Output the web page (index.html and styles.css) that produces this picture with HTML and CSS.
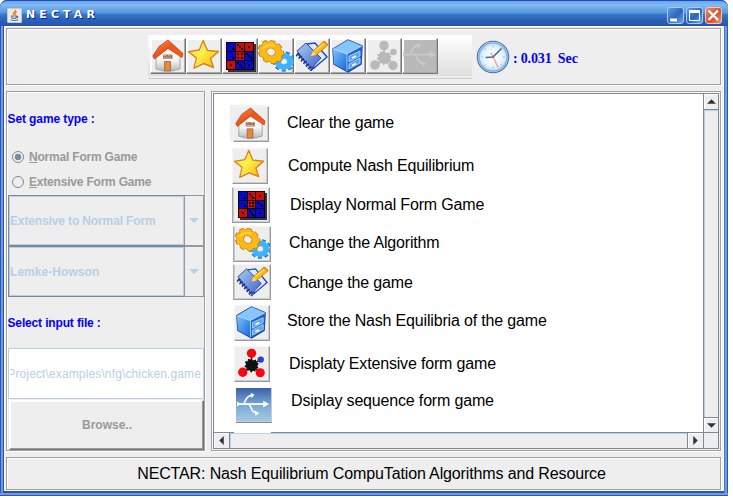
FILE: index.html
```html
<!DOCTYPE html>
<html lang="en">
<head>
<meta charset="utf-8">
<title>NECTAR</title>
<link rel="stylesheet" href="styles.css">
</head>
<body>
<svg class="defs" width="0" height="0">
  <defs>
    <linearGradient id="roof" x1="0" y1="0" x2="1" y2="1"><stop offset="0" stop-color="#ff9a68"/><stop offset=".45" stop-color="#e9561c"/><stop offset="1" stop-color="#ff5a1c"/></linearGradient>
    <linearGradient id="wall" x1="0" y1="0" x2="0" y2="1"><stop offset="0" stop-color="#fff"/><stop offset=".6" stop-color="#f4f4f4"/><stop offset="1" stop-color="#b9b9b9"/></linearGradient>
    <linearGradient id="gold" x1="0" y1="0" x2="1" y2="1"><stop offset="0" stop-color="#ffc814"/><stop offset=".45" stop-color="#fff04a"/><stop offset="1" stop-color="#ffa800"/></linearGradient>
    <linearGradient id="book" x1="0" y1="0" x2="1" y2="1"><stop offset="0" stop-color="#a9ccf5"/><stop offset="1" stop-color="#3e66c6"/></linearGradient>
    <linearGradient id="boxl" x1="0" y1="0" x2="1" y2="1"><stop offset="0" stop-color="#7cc3fb"/><stop offset="1" stop-color="#1766dd"/></linearGradient>
    <radialGradient id="dial"><stop offset="0" stop-color="#fff"/><stop offset=".6" stop-color="#e9f4fd"/><stop offset="1" stop-color="#b6daf6"/></radialGradient>
  </defs>
  <symbol id="house" viewBox="0 0 36 36">
    <path d="M6 15 17.500 6 30 15V31L22 33H13L6 31Z" fill="url(#wall)" stroke="#999" stroke-width=".8"/>
    <path d="M14.500 33V23.500h6V33Z" fill="#e58a35" stroke="#8f6a4c" stroke-width=".8"/>
    <path d="M18 2 33 15.500 32 19.500 18 10.500 4.500 21 2.800 18 9 8.500Z" fill="url(#roof)" stroke="#b5390e" stroke-width=".7" stroke-linejoin="round"/>
    <rect x="13" y="16.500" width="9.500" height="4.500" rx="1" fill="#9b7866"/><path d="M14 17.500h2M18 17h3M14 20h7" stroke="#e1b79a"/>
  </symbol>
  <symbol id="star" viewBox="0 0 36 36">
    <path d="M17.200 2.500 21.500 12.500 32.500 13.500 24.500 20.500 27.500 29.500 17.500 25.500 8 30.200 10.500 20 2.500 13.700 13.200 12Z" fill="url(#gold)" stroke="#d9821a" stroke-width="1.400" stroke-linejoin="round"/>
    <path d="m17.200 5-3 8.500L5 14.500M11.500 20 9.500 28l8-4" fill="none" stroke="#fff5a0" opacity=".5"/>
  </symbol>
  <symbol id="dice" viewBox="0 0 36 36" shape-rendering="crispEdges">
    <path d="M6 6H34V34H6Z" fill="#333"/><path d="M4 4H32V32H4Z" fill="#000"/>
    <path d="M5 5h8v8H5ZM5 14h8v8H5ZM23 14h8v8h-8ZM14 23h8v8h-8ZM23 23h8v8h-8Z" fill="#0a08d0"/>
    <path d="M14 5h8v8h-8ZM23 5h8v8h-8ZM14 14h8v8h-8ZM5 23h8v8H5Z" fill="#d80808"/>
    <path d="M7 7h1v1H7ZM10 10h2v2h-2ZM15 6h2v2h-2ZM17 8h2v2h-2ZM19 10h2v2h-2ZM26 8h2v2h-2ZM7 16h1v1H7ZM10 19h2v2h-2ZM15 15h2v2h-2ZM19 15h2v2h-2ZM15 19h2v2h-2ZM19 19h2v2h-2ZM24 15h2v2h-2ZM26 17h2v2h-2ZM28 19h2v2h-2ZM8 26h2v2H8ZM15 24h2v2h-2ZM17 26h2v2h-2ZM19 28h2v2h-2ZM26 26h2v2h-2Z"/>
  </symbol>
  <symbol id="gears" viewBox="0 0 36 36">
    <g transform="translate(26 23.500) scale(1 .9)">
      <circle r="9" fill="none" stroke="#1a78c0" stroke-width="4.500" pathLength="90" stroke-dasharray="6 4"/>
      <circle r="6" fill="none" stroke="#3fb2fb" stroke-width="6"/>
      <circle r="8.500" fill="none" stroke="#3fb2fb" stroke-width="3" pathLength="90" stroke-dasharray="5.500 4.500"/>
    </g>
    <g transform="translate(13 14) rotate(30) scale(1 .84)">
      <circle r="11.500" fill="none" stroke="#c27e0c" stroke-width="4.500" pathLength="90" stroke-dasharray="6 4"/>
      <circle r="8" fill="none" stroke="#b9780c" stroke-width="8"/>
      <circle r="8" fill="none" stroke="#ffb915" stroke-width="6.600"/>
      <circle r="11" fill="none" stroke="#ffb915" stroke-width="3.400" pathLength="90" stroke-dasharray="5.500 4.500"/>
    </g>
    <path d="M5 11q5-6 12-3" fill="none" stroke="#ffd94c" stroke-width="1.500"/>
  </symbol>
  <symbol id="note" viewBox="0 0 36 36">
    <path d="m3 16 13-9 15 12-14 14Z" fill="#2b4cac" stroke="#1d3b98"/>
    <path d="m13 6 8-1 12 14-13 11Z" fill="#dcecff" stroke="#2448b0" stroke-width="1.400"/>
    <path d="m3 13 9-8 15 15-10 11Z" fill="url(#book)" stroke="#2d50ad"/>
    <path d="m3 16 14 15" stroke="#20356f" stroke-width="4" stroke-dasharray="1.800 1.800"/>
    <path d="m3.500 17.500 13 14" stroke="#e7edfa" stroke-width="1.200" stroke-dasharray="1.800 1.800"/>
    <path d="M19 13 30 3l4 4-12 10-5 1Z" fill="#ffb915" stroke="#d38306"/><path d="m21 13 10-8" stroke="#ffe05a" stroke-width="1.300"/><path d="m17 18 2-5 3 4Z" fill="#f4d6ad"/><path d="m29 4 2-1 3 3-1 2Z" fill="#f28b20"/>
  </symbol>
  <symbol id="cabinet" viewBox="0 0 36 36">
    <path d="M3 11 18 2l14 6-1 18-13 8L4 26Z" fill="#5aa8f3" stroke="#1440a0" stroke-width="1.400"/>
    <path d="m3 11 14 5v17L4 26Z" fill="url(#boxl)"/><path d="M3 11 18 2l14 6-15 8Z" fill="#86c6fa"/>
    <path d="m17 16 15-8-1 18-14 8Z" fill="#1f5fc8"/>
    <path d="m19 18 11-5v5l-11 6ZM19 26l11-6v5l-11 6Z" fill="#5ca4ee" stroke="#c4e3ff" stroke-width=".8"/>
    <path d="m22 20 4-2M22 27.500l4-2" stroke="#fff" stroke-width="1.600"/><path d="m3 11 14 5 15-8M17 16v17" fill="none" stroke="#bfe4ff" stroke-width=".8"/>
  </symbol>
  <symbol id="molecule" viewBox="0 0 36 36">
    <path class="lines" d="m18 20 0-12M18 20 27 14M18 20 8 28M18 20 28 28"/>
    <path class="hub" d="m18 13 1.500 2 3-1 .5 3 2.500 1-1.500 2.500 1.500 2.500-3 .5-.5 3-2.500-1-2 2-1.500-2.500-3 .5v-3l-2.500-1.500 2-2-1.500-3 3-.2.500-2.800 2.500 1Z"/>
    <g class="atoms"><circle cx="18" cy="7.500" r="4.800"/><circle cx="9" cy="27" r="4.800"/><circle cx="27" cy="27.500" r="4.700"/></g>
    <circle class="ion" cx="27.500" cy="14" r="3.300"/>
  </symbol>
  <symbol id="usb" viewBox="0 0 36 36">
    <path d="M1 16.500H31" stroke="currentColor" stroke-width="1.800"/>
    <path d="M8 16c2-1 1-8 9-8.500M13 17c4 1 1 8 8 8.500" fill="none" stroke="currentColor" stroke-width="1.700"/>
    <path d="m28 13 6 3.500-6 3.500ZM15 5l4 2-3 3.500ZM19 23l5 3-4 2.500ZM1 14l4 2.500L1 19Z" fill="currentColor"/>
  </symbol>
</svg>

<div class="window">
  <header class="titlebar">
    <svg class="java" viewBox="0 0 15 15"><path d="M8 1c2 2-4 3-1 6M10 3C7 5 9 5 8 7" fill="none" stroke="#ed7f26" stroke-width="1.600"/><path d="M4 8h6q0 3-3 3T4 8ZM10 8.500q3 0 0 2M3 12.500q5 1.500 9 0" fill="none" stroke="#557899" stroke-width="1.200"/></svg>
    <h1>NECTAR</h1>
    <div class="controls">
      <button class="ctl"><svg viewBox="0 0 17 17"><path d="M3 11.500h7v3H3z" fill="#fff"/></svg></button>
      <button class="ctl"><svg viewBox="0 0 17 17"><path d="M3.500 4.500h10v9h-10z" fill="none" stroke="#fff"/><path d="M3 3h11v3H3z" fill="#fff"/></svg></button>
      <button class="ctl close"><svg viewBox="0 0 17 17"><path d="m3.500 3.500 9.500 9.500m0-9.500-9.500 9.500" stroke="#fff" stroke-width="2.400"/></svg></button>
    </div>
  </header>

  <main class="content">
    <section class="panel top">
      <div class="toolbar">
        <button class="tool"><svg><use href="#house"/></svg></button>
        <button class="tool"><svg><use href="#star"/></svg></button>
        <button class="tool"><svg><use href="#dice"/></svg></button>
        <button class="tool"><svg><use href="#gears"/></svg></button>
        <button class="tool"><svg><use href="#note"/></svg></button>
        <button class="tool"><svg><use href="#cabinet"/></svg></button>
        <button class="tool off"><svg><use href="#molecule"/></svg></button>
        <button class="tool off usb"><svg><use href="#usb"/></svg></button>
      </div>
      <svg class="clock" viewBox="0 0 32 32"><circle cx="16" cy="16" r="14.800" fill="url(#dial)" stroke="#4a6f9f" stroke-width="1"/><circle cx="16" cy="16" r="13.200" fill="none" stroke="#86b6e2" stroke-width="1.600"/><path d="M16 5v2M16 25v2M5 16h2M25 16h2M8 8l1 1M24 8l-1 1M8 24l1-1M24 24l-1-1" stroke="#a9bed2"/><path d="m14 12 7 14" stroke="#f5a386" stroke-width="1.300"/><path d="M9 16.500 16 16l8-8" fill="none" stroke="#4967a5" stroke-width="1.500"/></svg>
      <span class="time">: 0.031&nbsp; Sec</span>
    </section>

    <aside class="panel side">
      <h2>Set game type :</h2>
      <label class="radio first"><i class="dot on"></i><span><u>N</u>ormal Form Game</span></label>
      <label class="radio"><i class="dot"></i><span><u>E</u>xtensive Form Game</span></label>
      <div class="combo"><span class="value">Extensive to Normal Form</span><span class="arrow"><svg viewBox="0 0 10 5"><path d="M0 0h10L5 5Z"/></svg></span></div>
      <div class="combo"><span class="value lemke">Lemke-Howson</span><span class="arrow"><svg viewBox="0 0 10 5"><path d="M0 0h10L5 5Z"/></svg></span></div>
      <h2 class="pick">Select input file :</h2>
      <div class="field"><span>Project\examples\nfg\chicken.game</span></div>
      <button class="browse">Browse..</button>
    </aside>

    <section class="panel help">
      <ul class="view">
        <li class="r1"><span class="pic"><svg><use href="#house"/></svg></span><span class="label">Clear the game</span></li>
        <li class="r2"><span class="pic"><svg><use href="#star"/></svg></span><span class="label">Compute Nash Equilibrium</span></li>
        <li class="r3"><span class="pic edge"><svg><use href="#dice"/></svg></span><span class="label">Display Normal Form Game</span></li>
        <li class="r4"><span class="pic edge"><svg><use href="#gears"/></svg></span><span class="label">Change the Algorithm</span></li>
        <li class="r5"><span class="pic edge"><svg><use href="#note"/></svg></span><span class="label">Change the game</span></li>
        <li class="r6"><span class="pic"><svg><use href="#cabinet"/></svg></span><span class="label">Store the Nash Equilibria of the game</span></li>
        <li class="r7"><span class="pic"><svg><use href="#molecule"/></svg></span><span class="label">Displaty Extensive form game</span></li>
        <li class="r8"><span class="pic bus"><svg><use href="#usb"/></svg></span><span class="label">Dsiplay sequence form game</span></li>
      </ul>
      <div class="vbar"><b><svg viewBox="0 0 8 4"><path d="M4 0 8 4H0Z"/></svg></b><i></i><b><svg viewBox="0 0 8 4"><path d="M0 0h8L4 4Z"/></svg></b></div>
      <div class="hbar"><b><svg viewBox="0 0 4 8"><path d="M4 0v8L0 4Z"/></svg></b><i></i><b><svg viewBox="0 0 4 8"><path d="M0 0v8l4-4Z"/></svg></b></div>
      <div class="corner"></div>
    </section>

    <footer class="panel status"><span>NECTAR: Nash Equilibrium CompuTation Algorithms and Resource</span></footer>
  </main>
</div>
</body>
</html>
```
FILE: styles.css
```css
* { box-sizing: border-box; }
body { margin: 0; width: 733px; height: 498px; overflow: hidden; background: #fff; font-family: "Liberation Sans", Arial, sans-serif; }
button { padding: 0; margin: 0; border: 0; background: none; font: inherit; }
h1, h2, ul { margin: 0; padding: 0; list-style: none; }
svg { display: block; }
.defs { position: absolute; }

.window { width: 728px; height: 496px; padding: 0 4px 4px; border-radius: 7px 7px 0 0; background: linear-gradient(90deg, #2b56bd 0 1px, #719bdd 1px 3px, #2852af 3px 4px, #2852af 724px, #719bdd 725px 727px, #2b56bd 727px); border-bottom: 1px solid #2b56bd; box-shadow: inset 0 -2px #719bdd; }
.titlebar { height: 26px; margin: 0 -4px; padding: 3px 6px 0 7px; display: flex; align-items: center; border-top: 1px solid #2a48b5; border-radius: 7px 7px 0 0; background: linear-gradient(#65a7ee 0, #83baf3 4px, #609de4 10px, #5798df 12px, #397bca 13px, #2b65b9 18px, #2952af 25px); }
.java { width: 15px; height: 15px; background: #eee9e2; border: 1px solid #c5c8cc; border-radius: 1px; }
h1 { margin: 0 0 0 4px; color: #fff; font: bold 11px/14px "DejaVu Sans", sans-serif; letter-spacing: 4.1px; text-shadow: 1px 1px #0a1890; }
.controls { display: flex; gap: 2px; margin-left: auto; }
.ctl { width: 17px; height: 17px; border-radius: 3px; border: 1px solid #a7c8ef; background: linear-gradient(135deg, #669be0, #2965be 55%, #75aae1); }
.ctl svg { width: 17px; height: 17px; margin: -1px; }
.ctl.close { border-color: #efc2ba; background: linear-gradient(135deg, #e98a70, #d94c25 55%, #ef9476); }

.content { height: 465px; padding: 2px 2px 0; background: #eee; display: grid; grid-template: 57px 360px 33px / 199px 510px; gap: 6px; box-shadow: inset 0 1px #fff, inset 1px 0 #fff, inset -1px -1px #fff; }
.panel { border: 1px solid #a0a0a0; box-shadow: inset 1px 1px #fff, 1px 1px #fff; min-width: 0; }
.top { grid-column: 1 / 3; display: flex; padding: 6px 0 0 141px; }
.toolbar { width: 324px; height: 44px; padding: 3px 2px; display: flex; background: linear-gradient(#fff, #ddd); border-bottom: 1px solid #ccc; box-shadow: inset 0 -2px #eee; }
.tool { width: 36px; height: 36px; background: #eee; border: 1px solid; border-color: #fff #777 #777 #fff; box-shadow: inset -1px -1px #aaa, inset 1px 1px #fff; }
.tool svg { width: 36px; height: 36px; margin: -1px; }
.clock { width: 34px; height: 34px; margin: 5px 0 0 4px; }
.time { margin: 16px 0 0 3px; font: bold 14px/16px "Liberation Serif", serif; letter-spacing: -.1px; word-spacing: -.3px; color: #00f; white-space: nowrap; }
.tool { --ink: #111; }
.lines { stroke: var(--ink, #111); stroke-width: 1.5; }
.hub { fill: var(--ink, #111); }
.atoms { fill: var(--atom, #f80510); }
.ion { fill: var(--ion, #2745c3); }
.off { --ink: #b9b9b9; --atom: #b9b9b9; --ion: #b9b9b9; }
.off.usb { background: #b9b9b9; color: #c9c9c9; }

.side { padding: 20px 0 0 1px; }
h2 { margin-left: -.5px; font: bold 12px/14px "Liberation Sans", sans-serif; letter-spacing: -.1px; color: #00f; white-space: nowrap; }
.radio { display: flex; align-items: center; height: 25px; padding-left: 4px; gap: 5px; color: #999; font: bold 12px/14px "Liberation Sans", sans-serif; letter-spacing: -.2px; }
.radio.first { margin-top: 18px; }
.dot { width: 12px; height: 12px; border: 1px solid #7a8a99; border-radius: 50%; }
.dot.on { background: radial-gradient(circle, #7a8a99 0 3px, #eee 3.6px); }
.combo { display: flex; height: 51px; border: 1px solid #999; }
.radio + .combo { margin-top: 1px; }
.value { width: 175px; border: 1px solid #b8cfe5; outline: 1px solid #7a8a99; padding: 16px 0 0; color: #b8cfe5; font: bold 12px/16px "Liberation Sans", sans-serif; letter-spacing: -.13px; white-space: nowrap; }
.value.lemke { letter-spacing: .05px; }
.arrow { flex: 1; display: flex; align-items: center; justify-content: center; border-left: 1px solid #999; }
.arrow svg { width: 10px; height: 5px; fill: #b8cfe5; }
.pick { margin-top: 19px; letter-spacing: -.15px; }
.field { display: flex; justify-content: flex-end; height: 51px; margin-top: 18px; padding: 0 2px 0 1px; border: 1px solid #b8cfe5; background: #fff; }
.field span { display: flex; justify-content: flex-end; width: 191px; overflow: hidden; font-size: 12px; line-height: 51px; letter-spacing: .13px; color: #b8cfe5; white-space: nowrap; }
.browse { display: block; width: 195px; height: 50px; margin: 1px 0 0 1px; border: 1px solid; border-color: #fff #777 #777 #fff; box-shadow: inset -1px -1px #999, inset 1px 1px #fff; background: #eee; color: #999; font: bold 12px/16px "Liberation Sans", sans-serif; padding-left: 1px; }

.help { display: grid; grid-template: 340px 16px / 491px 15px; padding: 1px 0 0 1px; }
.view { position: relative; background: #fff; border: 1px solid #7a8a99; display: grid; grid-template-rows: 42px 40px 39px 38px 41px 41px 42px 37px; padding: 12px 0 0 18px; }
.view::after { content: ""; position: absolute; left: 20px; bottom: -1px; width: 37px; height: 1px; background: #fff; }
.view li { display: flex; align-items: flex-start; }
.pic { width: 36px; height: 36px; background: #eee; border: 1px solid; border-color: #f5f5f5 #999 #999 #f5f5f5; box-shadow: inset -1px -1px #ccc; }
.pic svg { width: 35px; height: 35px; margin: -1px; }
.r1 .pic { box-shadow: inset -1px -1px #ccc, -3px -1px #eee; }
.edge { width: 38px; border-left-color: #aaa; box-shadow: inset -1px -1px #ccc, inset 1px 0 #ccc; }
.edge svg { margin-left: 1px; }
.r3 .pic, .r4 .pic, .r5 .pic, .r6 .pic, .r7 .pic, .r8 .pic { margin-top: -1px; }
.bus { height: 35px; background: linear-gradient(#3c60ac, #7aa9d5 50%, #a4cce6); color: #fff; border: 0; border-bottom: 1px solid #888; }
.bus svg { margin: 0; }
.label { font-size: 16px; line-height: 20px; letter-spacing: -.17px; margin: 7px 0 0 18px; white-space: nowrap; }
.r1 { padding-left: 1px; }
.r2 .label { margin-top: 8px; margin-left: 20px; }
.r3 .label { margin-left: 20px; }
.r4 { padding-left: 1px; } .r4 .label { margin-top: 6px; margin-left: 18px; }
.r5 { padding-left: 1px; } .r5 .label { margin-top: 8px; margin-left: 17px; }
.r6 { padding-left: 2px; } .r6 .label { margin-top: 5px; margin-left: 17px; }
.r7 { padding-left: 2px; } .r7 .label { margin-left: 19px; }
.r8 { padding-left: 4px; } .r8 .label { margin-top: 2px; margin-left: 19px; }
.vbar, .hbar { display: flex; background: #eee; border: 1px solid #7a8a99; }
.vbar { flex-direction: column; border-left: 0; }
.hbar { border-top: 0; }
.vbar b, .hbar b { flex: 0 0 15px; display: flex; align-items: center; justify-content: center; box-shadow: inset 1px 1px #fff; }
.vbar b:last-child { flex-basis: 14px; }
.vbar i, .hbar i { flex: 1; border: 0 solid #7a8a99; }
.vbar i { border-width: 1px 0; box-shadow: inset 1px 1px #b8cfe5; }
.hbar i { border-width: 0 1px; box-shadow: inset 1px 1px #b8cfe5; }
.vbar svg { width: 9px; height: 5px; } .hbar svg { width: 5px; height: 9px; }
.vbar svg, .hbar svg { fill: #333; }
.corner { border: 1px solid #7a8a99; border-width: 0 1px 1px 0; }
.status { grid-column: 1 / 3; display: flex; justify-content: center; align-items: center; font-size: 16px; letter-spacing: -.13px; padding-left: 16px; white-space: nowrap; }
```
